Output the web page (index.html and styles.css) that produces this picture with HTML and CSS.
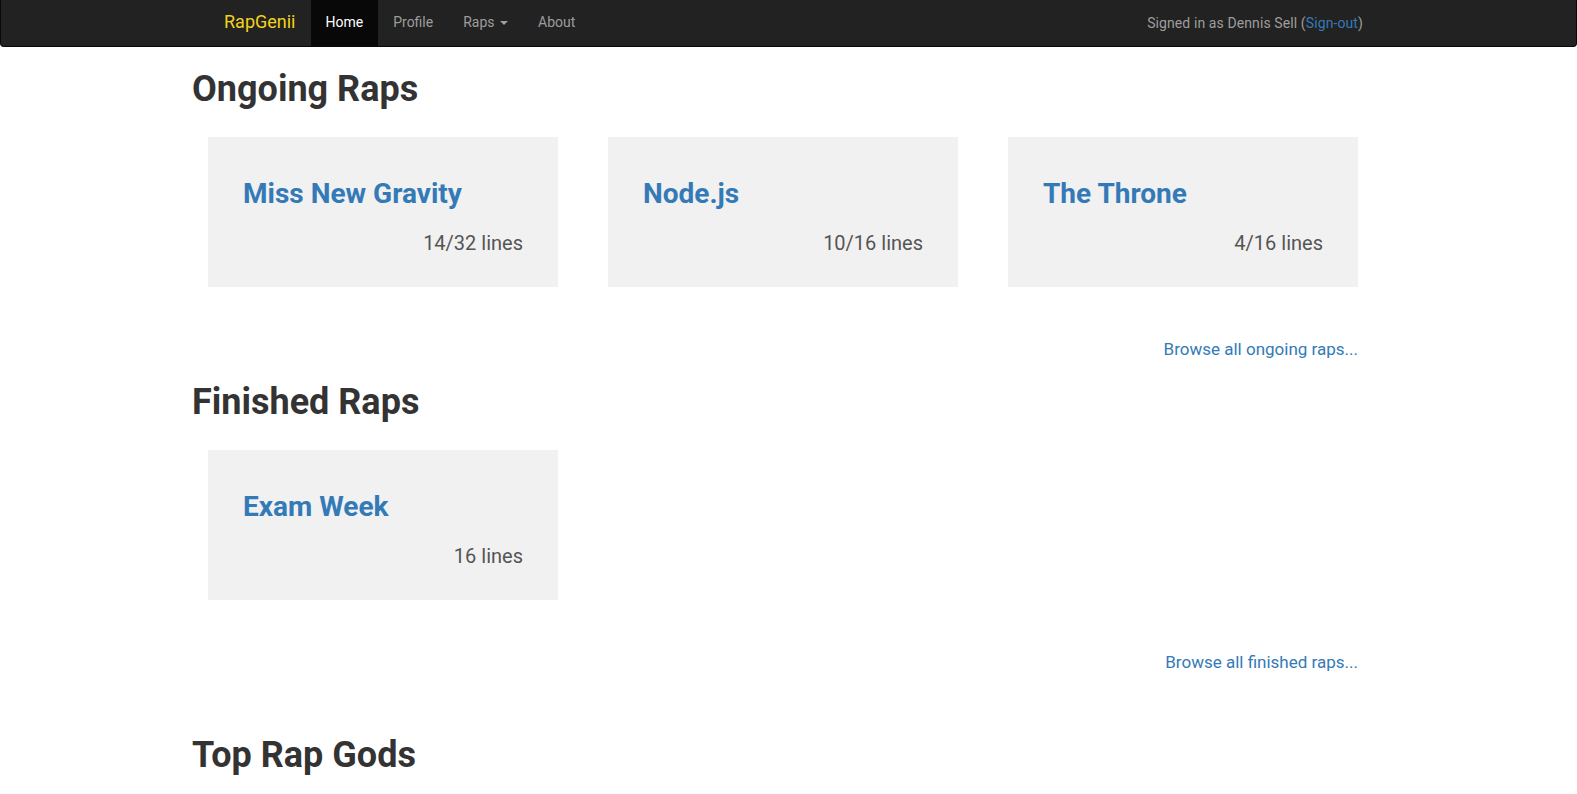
FILE: index.html
```html
<!DOCTYPE html>
<html lang="en">
<head>
<meta charset="utf-8">
<title>RapGenii</title>
<link rel="stylesheet" href="styles.css">
</head>
<body>
<nav class="navbar">
  <div class="navbar-inner">
    <div class="nav-left">
      <a class="brand" href="#">RapGenii</a>
      <ul class="nav">
        <li><a class="active" href="#">Home</a></li>
        <li><a href="#">Profile</a></li>
        <li><a href="#">Raps <span class="caret"></span></a></li>
        <li><a href="#">About</a></li>
      </ul>
    </div>
    <p class="navbar-text">Signed in as Dennis Sell (<a href="#">Sign-out</a>)</p>
  </div>
</nav>

<main class="container">
  <section class="section first">
    <h1 class="section-title">Ongoing Raps</h1>
    <div class="cards">
      <div class="card">
        <h2 class="card-title"><a href="#">Miss New Gravity</a></h2>
        <p class="card-lines">14/32 lines</p>
      </div>
      <div class="card">
        <h2 class="card-title"><a href="#">Node.js</a></h2>
        <p class="card-lines">10/16 lines</p>
      </div>
      <div class="card">
        <h2 class="card-title"><a href="#">The Throne</a></h2>
        <p class="card-lines">4/16 lines</p>
      </div>
    </div>
    <p class="browse"><a href="#">Browse all ongoing raps...</a></p>
  </section>

  <section class="section">
    <h1 class="section-title">Finished Raps</h1>
    <div class="cards">
      <div class="card">
        <h2 class="card-title"><a href="#">Exam Week</a></h2>
        <p class="card-lines">16 lines</p>
      </div>
    </div>
    <p class="browse"><a href="#">Browse all finished raps...</a></p>
  </section>

  <section class="section gods">
    <h1 class="section-title">Top Rap Gods</h1>
  </section>
</main>
</body>
</html>
```

FILE: styles.css
```css
* {
  box-sizing: border-box;
}

html, body {
  margin: 0;
  padding: 0;
  background: #fff;
}

body {
  font-family: Roboto, "Liberation Sans", sans-serif;
  font-size: 14px;
  line-height: 20px;
  color: #333;
}

a {
  text-decoration: none;
  color: #337ab7;
}

/* Navbar */
.navbar {
  height: 47px;
  background: #222;
  border: 1px solid #080808;
  border-top: 0;
  border-radius: 0 0 4px 4px;
}

.navbar-inner {
  margin-left: 208px;
  width: 1154px;
  height: 46px;
  display: flex;
  justify-content: space-between;
  align-items: stretch;
}

.nav-left {
  display: flex;
  align-items: stretch;
}

.brand {
  display: block;
  padding: 12px 15px 14px;
  font-size: 18px;
  line-height: 20px;
  color: #f2d21c;
}

.nav {
  display: flex;
  list-style: none;
  margin: 0;
  padding: 0;
}

.nav a {
  display: block;
  height: 46px;
  padding: 12px 15px 14px;
  color: #9d9d9d;
  line-height: 20px;
}

.nav a.active {
  background: #080808;
  color: #fff;
}

.caret {
  display: inline-block;
  width: 0;
  height: 0;
  margin-left: 2px;
  vertical-align: middle;
  border-top: 4px solid #9d9d9d;
  border-left: 4px solid transparent;
  border-right: 4px solid transparent;
}

.navbar-text {
  margin: 0;
  padding: 13px 0 13px;
  color: #9d9d9d;
  line-height: 20px;
  letter-spacing: 0.1px;
}

/* Main */
.container {
  margin-left: 192px;
  width: 1166px;
}

.section-title {
  margin: 22px 0 0;
  font-size: 36px;
  line-height: 39.6px;
  font-weight: 700;
  color: #333;
}

.first .section-title {
  margin-top: 23px;
}

.gods .section-title {
  margin-top: 62px;
}

.cards {
  display: flex;
  gap: 50px;
  margin-top: 27.5px;
  padding-left: 16px;
}

.card {
  width: 350px;
  height: 150px;
  background: #f1f1f1;
  padding: 41px 35px 0;
}

.card-title {
  margin: 0;
  font-size: 28px;
  line-height: 31px;
  font-weight: 700;
}

.card-title a {
  color: #337ab7;
}

.card-lines {
  margin: 20px 0 0;
  font-size: 20px;
  line-height: 28px;
  color: #555;
  text-align: right;
}

.browse {
  margin: 50px 0 0;
  font-size: 17px;
  line-height: 24px;
  text-align: right;
}
```
